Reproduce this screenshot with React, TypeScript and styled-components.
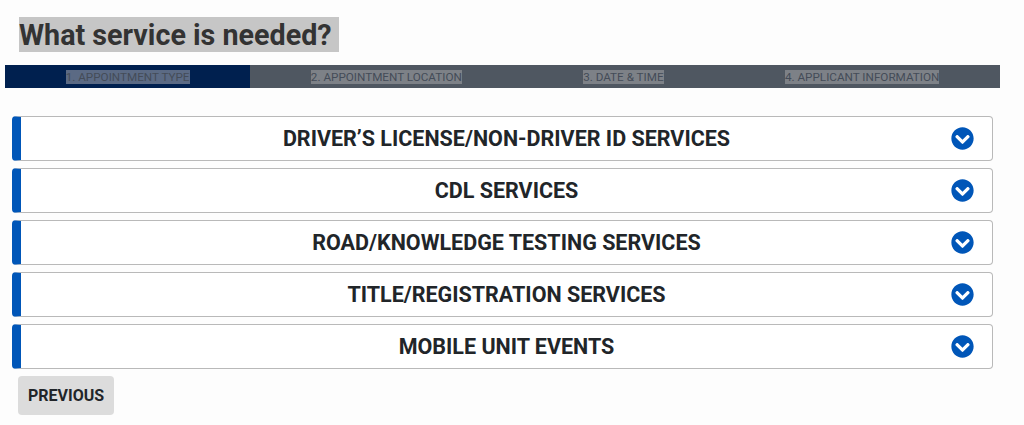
import React from "react";
import styled, { createGlobalStyle } from "styled-components";
import { FaChevronCircleDown } from "react-icons/fa";

const Global = createGlobalStyle`
  html, body { margin: 0; padding: 0; background: #fdfdfd; font-family: Roboto, "Liberation Sans", sans-serif; }
`;

const Page = styled.main`
  width: 1024px;
  height: 425px;
  padding: 17px 0 0 5px;
  box-sizing: border-box;
  overflow: hidden;
`;

const Heading = styled.h1`
  margin: 0 0 13px 14px;
  font-size: 28.7px;
  line-height: 35px;
  font-weight: 700;
  color: #333;
`;

const Highlight = styled.span`
  display: block;
  width: fit-content;
  box-sizing: border-box;
  background: #c6c6c6;
  padding: 1px 7px 0 0;
  height: 35px;
`;

const Steps = styled.nav`
  display: flex;
  width: 995px;
  height: 23px;
  background: #4f5761;
  margin-bottom: 28px;
`;

const Step = styled.div<{ $active?: boolean }>`
  flex: 1 1 auto;
  padding: 0 60px;
  display: flex;
  align-items: center;
  justify-content: center;
  font-size: 11.7px;
  background: ${(p) => (p.$active ? "#00204f" : "transparent")};
  color: #444c58;
`;

const StepText = styled.span<{ $active?: boolean }>`
  background: ${(p) => (p.$active ? "#5b6a84" : "#7d8187")};
  line-height: 14px;
  white-space: nowrap;
`;

const List = styled.div`
  display: flex;
  flex-direction: column;
  gap: 7px;
  margin-left: 7px;
  width: 981px;
`;

const Row = styled.div`
  position: relative;
  height: 45px;
  box-sizing: border-box;
  display: flex;
  align-items: center;
  justify-content: center;
  background: #fff;
  border: 1px solid #b9b9b9;
  border-left: 9px solid #0056b8;
  border-radius: 4px;
  font-size: 21.5px;
  line-height: 40px;
  font-weight: 700;
  color: #212529;
`;

const Chevron = styled.span`
  position: absolute;
  right: 18px;
  top: 10px;
  display: flex;
  color: #0056b8;
  font-size: 23px;
`;

const Previous = styled.button`
  display: block;
  margin: 7px 0 0 13px;
  width: 96px;
  height: 39px;
  border: 0;
  border-radius: 4px;
  background: #dcdcdc;
  color: #212529;
  font-family: inherit;
  font-size: 16px;
  font-weight: 700;
  padding: 0;
`;

const steps = ["1. APPOINTMENT TYPE", "2. APPOINTMENT LOCATION", "3. DATE & TIME", "4. APPLICANT INFORMATION"];
const services = [
  "DRIVER’S LICENSE/NON-DRIVER ID SERVICES",
  "CDL SERVICES",
  "ROAD/KNOWLEDGE TESTING SERVICES",
  "TITLE/REGISTRATION SERVICES",
  "MOBILE UNIT EVENTS",
];

export default function App() {
  return (
    <Page>
      <Global />
      <Heading>
        <Highlight>What service is needed?</Highlight>
      </Heading>
      <Steps>
        {steps.map((s, i) => (
          <Step key={s} $active={i === 0}>
            <StepText $active={i === 0}>{s}</StepText>
          </Step>
        ))}
      </Steps>
      <List>
        {services.map((s) => (
          <Row key={s}>
            {s}
            <Chevron>
              <FaChevronCircleDown />
            </Chevron>
          </Row>
        ))}
      </List>
      <Previous>PREVIOUS</Previous>
    </Page>
  );
}
